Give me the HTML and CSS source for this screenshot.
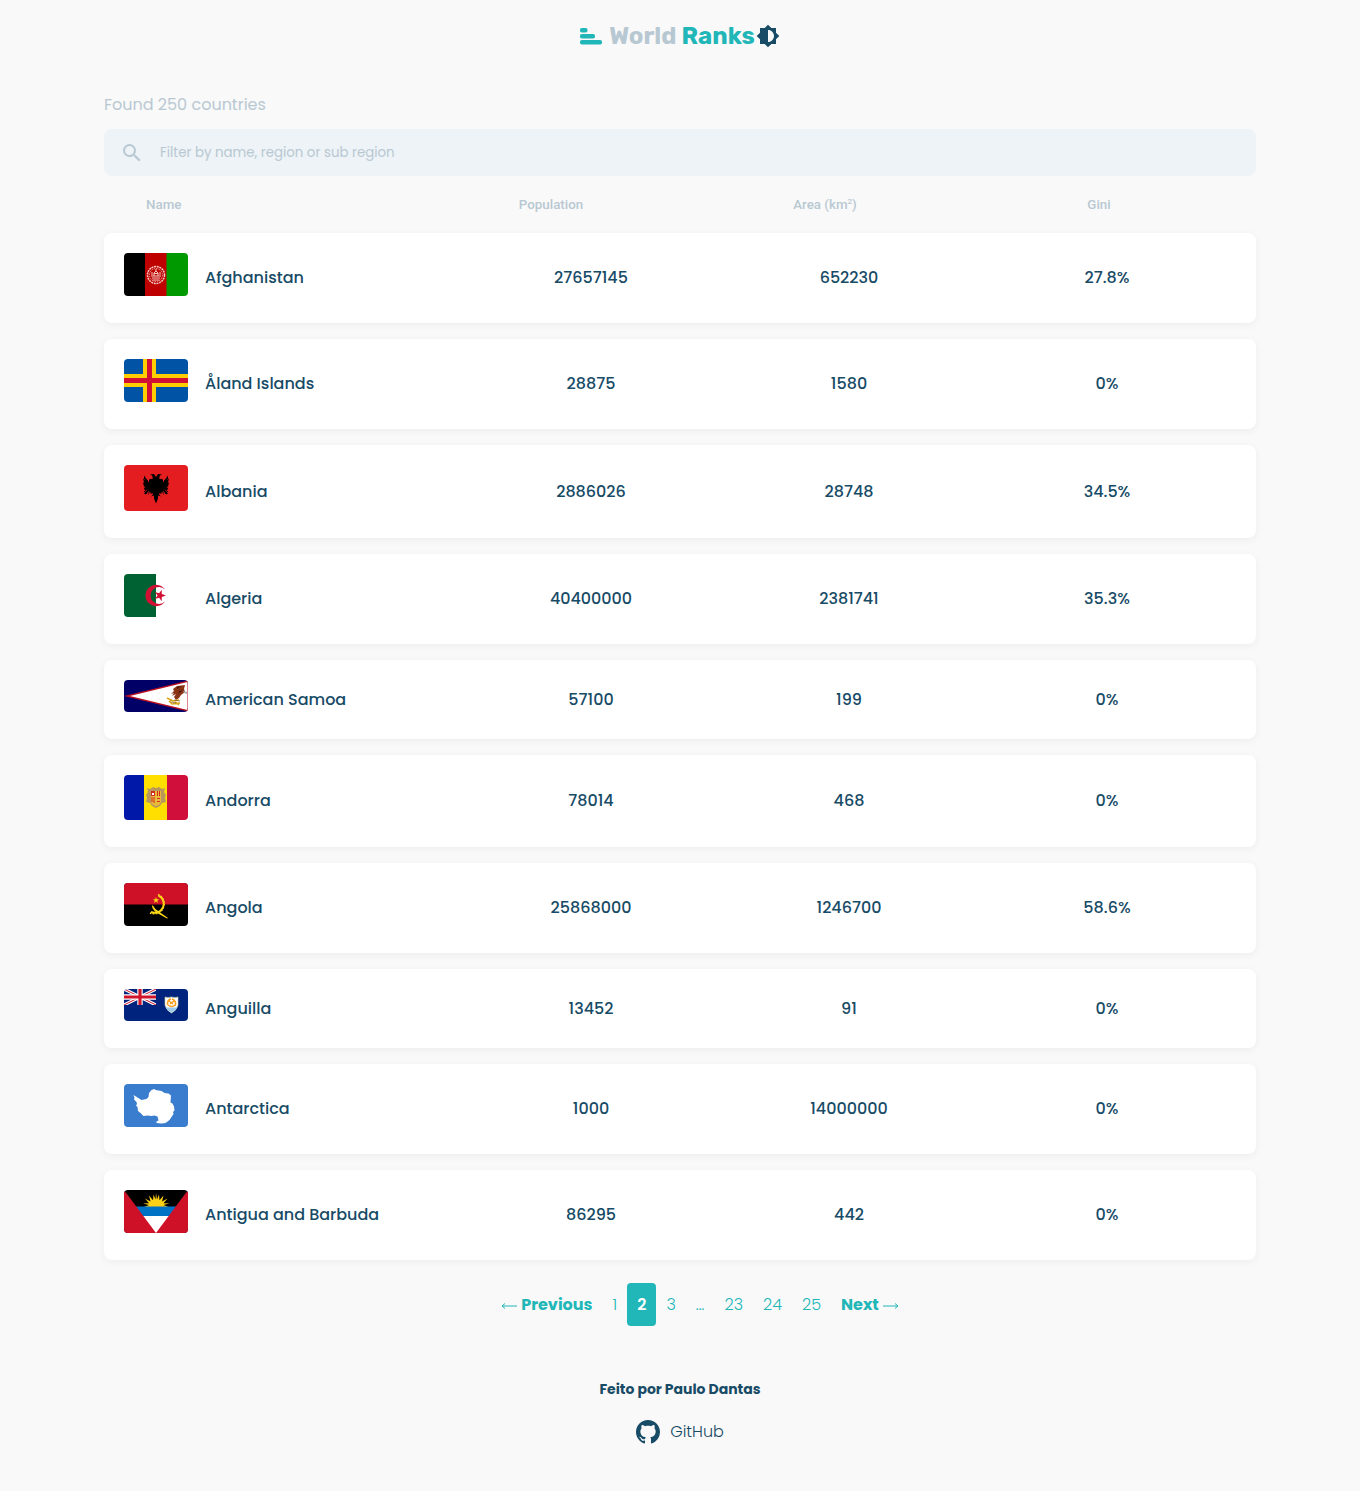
FILE: index.html
```html
<!DOCTYPE html>
<html lang="en">
<head>
<meta charset="utf-8">
<meta name="viewport" content="width=device-width, initial-scale=1">
<title>World Ranks</title>
<link rel="stylesheet" href="styles.css">
</head>
<body>
<header class="header">
  <a class="logo" href="#">
    <svg class="logo-mark" width="22" height="17" viewBox="0 0 22 17" aria-hidden="true"><rect width="7.500" height="4.500" rx="1.800"/><rect y="6" width="15" height="4.500" rx="1.800"/><rect y="12" width="22" height="4.500" rx="1.800"/></svg>
    <span class="logo-text">World <span class="logo-accent">Ranks</span></span>
  </a>
  <button class="theme-toggle" type="button" aria-label="Switch theme">
    <svg width="24" height="24" viewBox="0 0 24 24" aria-hidden="true"><path d="M20 15.31L23.31 12 20 8.69V4h-4.69L12 .69 8.69 4H4v4.69L.69 12 4 15.31V20h4.69L12 23.31 15.31 20H20v-4.69zM12 18V6c3.31 0 6 2.69 6 6s-2.69 6-6 6z"/></svg>
  </button>
</header>

<main class="container">
  <p class="found">Found 250 countries</p>
  <label class="search">
    <svg class="search-icon" width="24" height="24" viewBox="0 0 24 24" aria-hidden="true"><path d="M15.5 14h-.79l-.28-.27A6.471 6.471 0 0 0 16 9.5 6.5 6.5 0 1 0 9.5 16c1.61 0 3.09-.59 4.23-1.57l.27.28v.79l5 4.99L20.49 19l-4.99-5zm-6 0C7.01 14 5 11.99 5 9.5S7.01 5 9.5 5 14 7.01 14 9.5 11.99 14 9.5 14z"/></svg>
    <input class="search-input" type="text" placeholder="Filter by name, region or sub region" aria-label="Filter countries">
  </label>

  <table class="countries">
    <thead>
      <tr class="head-row">
        <th scope="col"><button class="sort sort-name" type="button">Name</button></th>
        <th scope="col"><button class="sort" type="button">Population</button></th>
        <th scope="col"><button class="sort" type="button">Area (km<sup class="unit">2</sup>)</button></th>
        <th scope="col"><button class="sort" type="button">Gini</button></th>
      </tr>
    </thead>
    <tbody class="rows">
      <tr class="row">
        <td class="country"><svg class="flag" width="64" height="43" viewBox="0 0 64 43" aria-hidden="true"><path d="M0 0h22v43H0z"/><path fill="#bf0000" d="M21 0h22v43H21z"/><path fill="#090" d="M42.500 0H64v43H42.500z"/><g fill="none" stroke="#f3c9c2"><circle cx="32" cy="22" r="8.500" stroke-width="1.500" stroke-dasharray="2 .7"/><circle cx="32" cy="22" r="6.500" stroke-width=".8" stroke-dasharray="1.500 1"/><path d="M28 25h8M29 23h6M30 20.500h4M32 16v3M30 23v-3l2-2 2 2v3M28.500 27h7M28 19v5M36 19v5" stroke-width="1"/></g></svg><span>Afghanistan</span></td>
        <td>27657145</td><td>652230</td><td>27.8%</td>
      </tr>
      <tr class="row">
        <td class="country"><svg class="flag" width="64" height="43" viewBox="0 0 64 43" aria-hidden="true"><path fill="#0053a5" d="M0 0h64v43H0z"/><path fill="#ffce00" d="M19 0h13v15h32v13H32v15H19V28H0V15h19z"/><path fill="#d21034" d="M23 0h5v19h36v5H28v19h-5V24H0v-5h23z"/></svg><span>Åland Islands</span></td>
        <td>28875</td><td>1580</td><td>0%</td>
      </tr>
      <tr class="row">
        <td class="country"><svg class="flag" width="64" height="46" viewBox="0 0 64 46" aria-hidden="true"><path fill="#e41e20" d="M0 0h64v46H0z"/><path d="M32 12l-2-3-4 .5 2 1 1 3-4 1v3l-5-7v3l2 2-3-2 1 4 2 1-3-1 1 4 3-1-3 3 1 2 3-2-4 5 2 1 3-4-1 5 2-4 1 3 1-2 1 2-2 2 3-1v3l2 5 2-5v-3l3 1-2-2 1-2 1 2 1-3 2 4-1-5 3 4 2-1-4-5 3 2 1-2-3-3 3 1 1-4-3 1 2-1 1-4-3 2 2-2v-3l-5 7v-3l-4-1 1-3 2-1-4-.5z"/><path d="M20 13l4 3M20 17l4 2M20 22l5-2M20 27l5-5M44 13l-4 3M44 17l-4 2M44 22l-5-2M44 27l-5-5" stroke="#000" stroke-width=".8"/></svg><span>Albania</span></td>
        <td>2886026</td><td>28748</td><td>34.5%</td>
      </tr>
      <tr class="row">
        <td class="country"><svg class="flag" width="64" height="43" viewBox="0 0 64 43" aria-hidden="true"><path fill="#fff" d="M0 0h64v43H0z"/><path fill="#006233" d="M0 0h32v43H0z"/><path fill="#d21034" d="M41.200 15.700A10.700 10.700 0 1 0 41.200 27.300 8.500 8.500 0 1 1 41.200 15.700zM42 21.500l-4.200 1.400-.1 4.400-2.600-3.600-4.200 1.300 2.600-3.500-2.600-3.500 4.200 1.300 2.600-3.600.1 4.400z"/></svg><span>Algeria</span></td>
        <td>40400000</td><td>2381741</td><td>35.3%</td>
      </tr>
      <tr class="row">
        <td class="country"><svg class="flag" width="64" height="32" viewBox="0 0 64 32" aria-hidden="true"><path fill="#006" d="M0 0h64v32H0z"/><path fill="#bd1021" d="M0 16L64 .5v31z"/><path fill="#fff" d="M6 16l57.500-14v28z"/><path fill="#8a3414" d="M49 9l4-3 8-1-1 4 1 3-4 3-2 3-3 2-2-3 2-3-4 2 2-3-3 1 3-3z"/><path fill="#4f1c0c" d="M53 7l5-1-5 3zM55 11l4-1-5 4z"/><path fill="#aaa" d="M59 11l4 1v2l-3-1z"/><path d="M43 18l6 3 6-1M45 21l3 3 8-1M51 22l4 3M47 19l-1 3" fill="none" stroke="#d8a61d" stroke-width="1.500"/><path d="M50 20l6 1M47 22l5 1" stroke="#77562a" stroke-width=".7"/></svg><span>American Samoa</span></td>
        <td>57100</td><td>199</td><td>0%</td>
      </tr>
      <tr class="row">
        <td class="country"><svg class="flag" width="64" height="45" viewBox="0 0 64 45" aria-hidden="true"><path fill="#0018a8" d="M0 0h21v45H0z"/><path fill="#fedf00" d="M20 0h24v45H20z"/><path fill="#d0103a" d="M43 0h21v45H43z"/><path fill="#b9975b" d="M23 13l3 1 3-2 3 1 3-1 3 2 3-1-1 4 2 3-1 3 1 4-4 1-2 3-4 2-4-2-2-3-4-1 1-4-1-3 2-3z"/><path fill="#e8b93a" d="M27 16h10v11q-1 3-5 4-4-1-5-4z"/><path fill="#d52b1e" d="M27 16h4v5h-4zM33 16h1v5h-1zM35 16h1v5h-1zM27.500 22h1v5h-1zM29.500 22h1v6h-1zM33 23h3v1h-3zM33 26h3v1h-3z"/><path fill="#fff" d="M28 18h2v2h-2z"/></svg><span>Andorra</span></td>
        <td>78014</td><td>468</td><td>0%</td>
      </tr>
      <tr class="row">
        <td class="country"><svg class="flag" width="64" height="43" viewBox="0 0 64 43" aria-hidden="true"><path d="M0 0h64v43H0z"/><path fill="#ce1126" d="M0 0h64v21.500H0z"/><path d="M34.500 12.500A9 9 0 1 1 27 29" fill="none" stroke="#f9d616" stroke-width="2"/><path d="M34 11.500A10 10 0 1 1 26 30" fill="none" stroke="#f9d616" stroke-width="1.500" stroke-dasharray="1.500 1.500"/><path d="M28.500 22q2 4 7 7l8.500 6-1 .5-9-5q-5-3-6-7z" fill="#f9d616"/><path fill="#f9d616" d="M32 14l.8 2.200h2.400l-1.900 1.500.7 2.300-2-1.400-2 1.400.7-2.300-1.900-1.500h2.400z"/></svg><span>Angola</span></td>
        <td>25868000</td><td>1246700</td><td>58.6%</td>
      </tr>
      <tr class="row">
        <td class="country"><svg class="flag" width="64" height="32" viewBox="0 0 64 32" aria-hidden="true"><path fill="#00247d" d="M0 0h64v32H0z"/><svg width="32" height="16" viewBox="0 0 32 16"><path d="M0 0l32 16M32 0L0 16" stroke="#fff" stroke-width="3.200"/><path d="M0 0l32 16M32 0L0 16" stroke="#cf142b" stroke-width="1"/><path d="M16 0v16M0 8h32" stroke="#fff" stroke-width="5.400"/><path d="M16 0v16M0 8h32" stroke="#cf142b" stroke-width="3.200"/></svg><path fill="#fff" stroke="#c9cf9d" stroke-width=".6" d="M41 8q3 1 6.500 0 3.500 1 6.500 0v8q-1 5-6.500 8-5.500-3-6.500-8z"/><path fill="#9acbee" d="M41.500 18.500h12q-2 3-6 5-4-2-6-5z"/><path d="M47 10q-4 1-3.500 6M48 10q5 2 3 7M44 16q4 3 7 0M45 12l4 3M46 15l4-3" fill="none" stroke="#ff9d1c" stroke-width="1.500"/></svg><span>Anguilla</span></td>
        <td>13452</td><td>91</td><td>0%</td>
      </tr>
      <tr class="row">
        <td class="country"><svg class="flag" width="64" height="43" viewBox="0 0 64 43" aria-hidden="true"><path fill="#3a7dce" d="M0 0h64v43H0z"/><path fill="#fff" d="M9.500 11l4 2.500 4 2.500 5-1 2-2 .5-4 2.500-3 3-1 1 1 6 1 3 2 4 .5 2.500 2-.5 7 2 1 1.500 3 .5 4-1.500 1.500.5 2-2 3-2 3-4 3-4 .5-5-.5 0-1.500 2-1-1-4-3-1-3 .5-4-.5-4 .5-3-3-2.500-2-.5-4-1.500-1.500 1-1.500-.5-2-2.500-2.500.5-1.500z"/></svg><span>Antarctica</span></td>
        <td>1000</td><td>14000000</td><td>0%</td>
      </tr>
      <tr class="row">
        <td class="country"><svg class="flag" width="64" height="43" viewBox="0 0 64 43" aria-hidden="true"><path d="M0 0h64v43H0z"/><path fill="#fcd116" d="M20 17l5-2-6-1.500 6-.3-4-4.700 5.500 3-1.500-6 4 4.700.5-5.700 2 5L32 3l1 6.500 2-5 .5 5.700 4-4.700-1.500 6 5.500-3-4 4.700 6 .3-6 1.500 5 2z"/><path fill="#0072c6" d="M10 16.500h44V27H10z"/><path fill="#fff" d="M18 26h28v17H18z"/><path fill="#ce1126" d="M0 0l32 43L64 0v43H0z"/></svg><span>Antigua and Barbuda</span></td>
        <td>86295</td><td>442</td><td>0%</td>
      </tr>
    </tbody>
  </table>

  <nav class="pagination" aria-label="Pagination">
    <a class="page step" href="#"><svg class="arrow" width="16" height="8" viewBox="0 0 16 8" aria-hidden="true"><path d="M4 1.500L1 4l3 2.500M1 4h15"/></svg>Previous</a>
    <a class="page" href="#">1</a>
    <a class="page active" href="#" aria-current="page">2</a>
    <a class="page" href="#">3</a>
    <a class="page" href="#">...</a>
    <a class="page" href="#">23</a>
    <a class="page" href="#">24</a>
    <a class="page" href="#">25</a>
    <a class="page step" href="#">Next<svg class="arrow" width="16" height="8" viewBox="0 0 16 8" aria-hidden="true"><path d="M12 1.500L15 4l-3 2.500M15 4H0"/></svg></a>
  </nav>
</main>

<footer class="footer">
  <strong class="author">Feito por Paulo Dantas</strong>
  <a class="github" href="#">
    <svg width="24" height="24" viewBox="0 0 16 16" aria-hidden="true"><path d="M8 0C3.580 0 0 3.580 0 8c0 3.540 2.290 6.530 5.470 7.590.4.070.55-.17.55-.38 0-.19-.01-.82-.01-1.490-2.010.37-2.530-.49-2.690-.94-.09-.23-.48-.94-.82-1.130-.28-.15-.68-.52-.01-.53.63-.01 1.080.58 1.230.82.72 1.210 1.870.87 2.330.66.07-.52.28-.87.51-1.070-1.780-.2-3.640-.89-3.640-3.950 0-.87.31-1.590.82-2.150-.08-.2-.36-1.020.08-2.120 0 0 .67-.21 2.200.82.64-.18 1.320-.27 2-.27s1.360.09 2 .27c1.530-1.040 2.200-.82 2.200-.82.44 1.100.16 1.920.08 2.120.51.56.82 1.270.82 2.150 0 3.070-1.870 3.750-3.650 3.950.29.25.54.73.54 1.480 0 1.070-.01 1.930-.01 2.200 0 .21.15.46.55.38A8.010 8.010 0 0 0 16 8c0-4.420-3.580-8-8-8z"/></svg>
    <span>GitHub</span>
  </a>
</footer>
</body>
</html>
```
FILE: styles.css
```css
:root {
  --bg: #f9f9f9;
  --ink: #174b66;
  --muted: #b8c8d2;
  --accent: #21b6b7;
  --field: #edf3f6;
}

* {
  box-sizing: border-box;
  margin: 0;
  padding: 0;
}

body {
  background: var(--bg);
  color: var(--ink);
  font-family: Poppins, Inter, sans-serif;
  font-size: 16px;
  line-height: 24px;
}

a {
  color: inherit;
  text-decoration: none;
}

button {
  background: none;
  border: 0;
  color: inherit;
  cursor: pointer;
}

svg {
  display: block;
  flex: none;
  fill: currentColor;
}

.header {
  display: flex;
  align-items: center;
  justify-content: center;
  gap: 1px;
  height: 72px;
}

.logo {
  display: flex;
  align-items: center;
  gap: 7px;
  color: var(--muted);
  font: 700 24px/28px Rubik, Roboto, sans-serif;
}

.logo-mark,
.logo-accent {
  color: var(--accent);
}

.theme-toggle {
  color: var(--ink);
}

.container {
  max-width: 1200px;
  margin: 0 auto;
  padding: 21px 24px 0;
}

.found {
  margin-bottom: 12px;
  color: var(--muted);
}

.search {
  display: flex;
  align-items: center;
  gap: 16px;
  height: 47px;
  padding: 0 16px;
  border-radius: 8px;
  background: var(--field);
  color: var(--muted);
}

.search-input {
  flex: 1;
  min-width: 0;
  border: 0;
  outline: 0;
  background: none;
  color: var(--ink);
  font-family: Poppins, Inter, sans-serif;
  line-height: 20px;
}

.search-input::placeholder {
  color: var(--muted);
}

.countries,
.countries thead {
  display: block;
}

.head-row,
.row {
  display: grid;
  align-items: center;
  padding: 0 20px;
  text-align: center;
}

.head-row {
  grid-template-columns: 290fr repeat(3, 274fr);
  height: 57px;
  padding-bottom: 2px;
  color: var(--muted);
}

.head-row th:first-child {
  padding-left: 22px;
  text-align: left;
}

.sort {
  font-family: Roboto, sans-serif;
  font-weight: 500;
  line-height: 16px;
}

.unit {
  font-size: 8px;
  line-height: 0;
}

.rows {
  display: flex;
  flex-direction: column;
  gap: 16px;
}

.row {
  grid-template-columns: 338fr repeat(3, 258fr);
  padding: 20px;
  border-radius: 8px;
  background: #fff;
  box-shadow: 0 2px 8px rgba(0, 0, 0, 0.05);
  font-weight: 500;
}

.country {
  display: flex;
  align-items: center;
  gap: 17px;
  text-align: left;
}

.flag {
  margin-bottom: 7px;
  border-radius: 4px;
  fill: #000;
}

.pagination {
  display: flex;
  justify-content: center;
  padding-top: 23px;
  padding-left: 40px;
  color: var(--accent);
  font-weight: 300;
}

.page {
  padding: 10px;
  border-radius: 4px;
  line-height: 23px;
}

.step {
  display: flex;
  align-items: center;
  gap: 4px;
  font-weight: 700;
}

.arrow {
  margin-top: 2px;
  fill: none;
  stroke: currentColor;
}

.active {
  background: var(--accent);
  color: #fff;
  font-weight: 600;
}

.footer {
  display: flex;
  flex-direction: column;
  align-items: center;
  gap: 19px;
  padding: 51px 0 47px;
}

.author {
  font-size: 14px;
}

.github {
  display: flex;
  align-items: center;
  gap: 10px;
  font-weight: 300;
}
```
